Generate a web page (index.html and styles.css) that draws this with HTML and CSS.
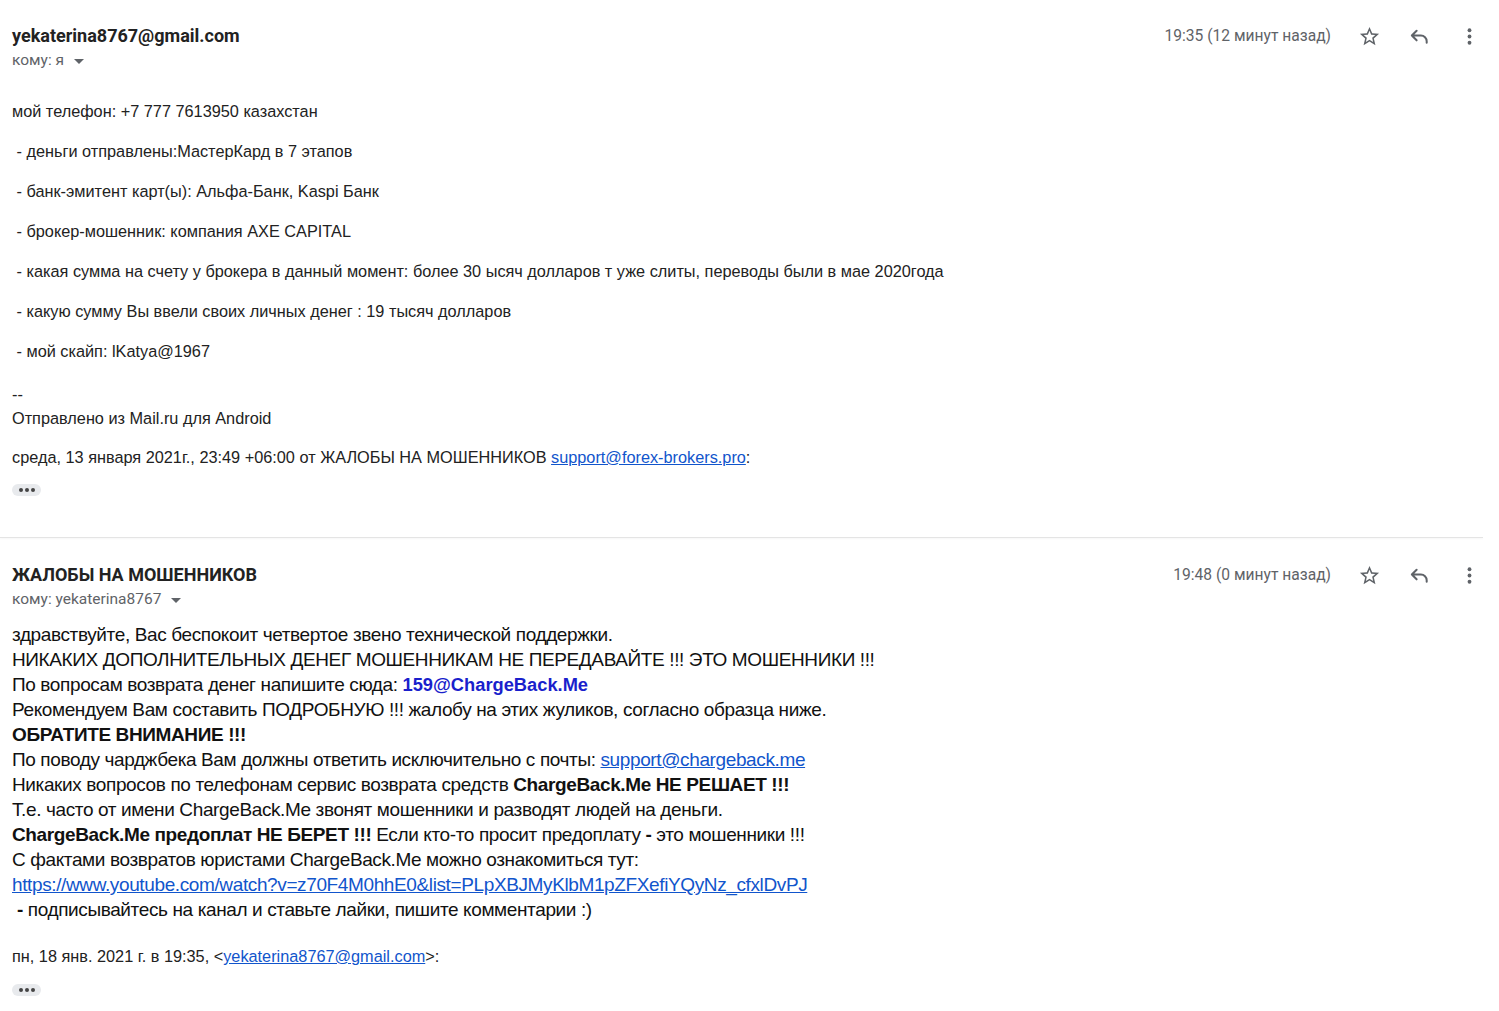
FILE: index.html
```html
<!DOCTYPE html>
<html lang="ru">
<head>
<meta charset="utf-8">
<title>Mail</title>
<link rel="stylesheet" href="styles.css">
</head>
<body>
<div class="thread">
  <div class="msg msg1">
    <div class="head">
      <div class="who">
        <div class="sender">yekaterina8767@gmail.com</div>
        <div class="to">кому: я <span class="caret"></span></div>
      </div>
      <div class="meta">
        <span class="time">19:35 (12 минут назад)</span>
        <span class="ico"><svg viewBox="0 0 24 24"><path d="M22 9.24l-7.19-.62L12 2 9.19 8.63 2 9.24l5.46 4.73L5.82 21 12 17.27 18.18 21l-1.63-7.03L22 9.24zM12 15.4l-3.76 2.27 1-4.28-3.32-2.88 4.38-.38L12 6.1l1.71 4.04 4.38.38-3.32 2.88 1 4.28L12 15.4z" fill="#5f6368"/></svg></span>
        <span class="ico"><svg viewBox="0 0 24 24"><path d="M9 6L4 11l5 5M4 11h9.5a6 6 0 0 1 6 6v1.5" fill="none" stroke="#5f6368" stroke-width="2.1" stroke-linecap="round" stroke-linejoin="round"/></svg></span>
        <span class="ico"><svg viewBox="0 0 24 24"><circle cx="12" cy="5.5" r="2" fill="#5f6368"/><circle cx="12" cy="12" r="2" fill="#5f6368"/><circle cx="12" cy="18.5" r="2" fill="#5f6368"/></svg></span>
      </div>
    </div>
    <div class="body1">
      <p>мой телефон: +7 777 7613950 казахстан</p>
      <p>&nbsp;- деньги отправлены:МастерКард в 7 этапов</p>
      <p>&nbsp;- банк-эмитент карт(ы): Альфа-Банк, Kaspi Банк</p>
      <p>&nbsp;- брокер-мошенник: компания AXE CAPITAL</p>
      <p>&nbsp;- какая сумма на счету у брокера в данный момент: более 30 ысяч долларов т уже слиты, переводы были в мае 2020года</p>
      <p>&nbsp;- какую сумму Вы ввели своих личных денег : 19 тысяч долларов</p>
      <p>&nbsp;- мой скайп: lKatya@1967</p>
      <p class="sig">--<br>Отправлено из Mail.ru для Android</p>
      <p class="quote">среда, 13 января 2021г., 23:49 +06:00 от ЖАЛОБЫ НА МОШЕННИКОВ <a href="#">support@forex-brokers.pro</a>:</p>
      <div class="more"><span></span><span></span><span></span></div>
    </div>
  </div>
  <div class="divider"></div>
  <div class="msg msg2">
    <div class="head">
      <div class="who">
        <div class="sender">ЖАЛОБЫ НА МОШЕННИКОВ</div>
        <div class="to">кому: yekaterina8767 <span class="caret"></span></div>
      </div>
      <div class="meta">
        <span class="time">19:48 (0 минут назад)</span>
        <span class="ico"><svg viewBox="0 0 24 24"><path d="M22 9.24l-7.19-.62L12 2 9.19 8.63 2 9.24l5.46 4.73L5.82 21 12 17.27 18.18 21l-1.63-7.03L22 9.24zM12 15.4l-3.76 2.27 1-4.28-3.32-2.88 4.38-.38L12 6.1l1.71 4.04 4.38.38-3.32 2.88 1 4.28L12 15.4z" fill="#5f6368"/></svg></span>
        <span class="ico"><svg viewBox="0 0 24 24"><path d="M9 6L4 11l5 5M4 11h9.5a6 6 0 0 1 6 6v1.5" fill="none" stroke="#5f6368" stroke-width="2.1" stroke-linecap="round" stroke-linejoin="round"/></svg></span>
        <span class="ico"><svg viewBox="0 0 24 24"><circle cx="12" cy="5.5" r="2" fill="#5f6368"/><circle cx="12" cy="12" r="2" fill="#5f6368"/><circle cx="12" cy="18.5" r="2" fill="#5f6368"/></svg></span>
      </div>
    </div>
    <div class="body2">
      <div class="lines">
        <div>здравствуйте, Вас беспокоит четвертое звено технической поддержки.</div>
        <div>НИКАКИХ ДОПОЛНИТЕЛЬНЫХ ДЕНЕГ МОШЕННИКАМ НЕ ПЕРЕДАВАЙТЕ !!! ЭТО МОШЕННИКИ !!!</div>
        <div>По вопросам возврата денег напишите сюда: <b class="blue">159@ChargeBack.Me</b></div>
        <div>Рекомендуем Вам составить ПОДРОБНУЮ !!! жалобу на этих жуликов, согласно образца ниже.</div>
        <div><b>ОБРАТИТЕ ВНИМАНИЕ !!!</b></div>
        <div>По поводу чарджбека Вам должны ответить исключительно с почты: <a href="#">support@chargeback.me</a></div>
        <div>Никаких вопросов по телефонам сервис возврата средств <b>ChargeBack.Me НЕ РЕШАЕТ !!!</b></div>
        <div>Т.е. часто от имени ChargeBack.Me звонят мошенники и разводят людей на деньги.</div>
        <div><b>ChargeBack.Me предоплат НЕ БЕРЕТ !!!</b> Если кто-то просит предоплату <b>-</b> это мошенники !!!</div>
        <div>С фактами возвратов юристами ChargeBack.Me можно ознакомиться тут:</div>
        <div><a href="#">https://www.youtube.com/watch?v=z70F4M0hhE0&amp;list=PLpXBJMyKlbM1pZFXefiYQyNz_cfxlDvPJ</a></div>
        <div>&nbsp;<b>-</b> подписывайтесь на канал и ставьте лайки, пишите комментарии :)</div>
      </div>
      <p class="quote">пн, 18 янв. 2021 г. в 19:35, &lt;<a href="#">yekaterina8767@gmail.com</a>&gt;:</p>
      <div class="more"><span></span><span></span><span></span></div>
    </div>
  </div>
</div>
</body>
</html>
```

FILE: styles.css
```css
* { box-sizing: border-box; }
html, body { margin: 0; padding: 0; background: #fff; }
body { font-family: "Liberation Sans", Arial, sans-serif; color: #222; }
.thread { width: 1494px; }
.msg { padding: 0 0 0 12px; }
.msg1 { padding-top: 25px; padding-bottom: 41px; }
.divider { width: 1483px; height: 1px; background: #e4e4e4; box-shadow: 0 1px 2px rgba(0,0,0,0.05); }
.msg2 { padding-top: 26px; }
.head { display: flex; justify-content: space-between; align-items: flex-start; }
.sender { font-family: Roboto, "Liberation Sans", sans-serif; font-weight: 700; font-size: 18px; line-height: 22px; color: #222; }
.to { font-family: Roboto, "Liberation Sans", sans-serif; font-size: 15.5px; line-height: 20px; color: #5f6368; margin-top: 3px; display: flex; align-items: center; gap: 8px; }
.caret { width: 0; height: 0; border-left: 5px solid transparent; border-right: 5px solid transparent; border-top: 5px solid #5f6368; margin-top: 2px; margin-left: 2px; }
.meta { display: flex; align-items: center; }
.time { font-family: Roboto, "Liberation Sans", sans-serif; font-size: 15.6px; color: #5f6368; margin-right: 13px; line-height: 22px; }
.ico { width: 50px; height: 22px; display: flex; align-items: center; justify-content: center; }
.ico svg { width: 23px; height: 23px; }
.body1 { margin-top: 32px; font-size: 16.3px; line-height: 18px; color: #222; }
.body1 p { margin: 0 0 22px; }
.body1 .sig { line-height: 24px; margin-bottom: 18px; }
.body1 .quote { margin-bottom: 18px; }
a { color: #1155cc; text-decoration: underline; }
.more { width: 29px; height: 12px; background: #e8eaed; border-radius: 6px; display: flex; align-items: center; justify-content: center; gap: 2px; }
.more span { width: 4px; height: 4px; border-radius: 50%; background: #444; }
.body2 { margin-top: 13px; }
.lines { font-family: "Liberation Sans", Arial, sans-serif; font-size: 19px; letter-spacing: -0.38px; line-height: 25px; color: #111; }
.lines b { font-weight: 700; }
.lines .blue { font-size: 18.3px; letter-spacing: 0; color: #1a1fcc; }
.body2 .quote { margin: 25px 0 0; font-size: 16.3px; line-height: 18px; }
.body2 .more { margin-top: 19px; }
```
